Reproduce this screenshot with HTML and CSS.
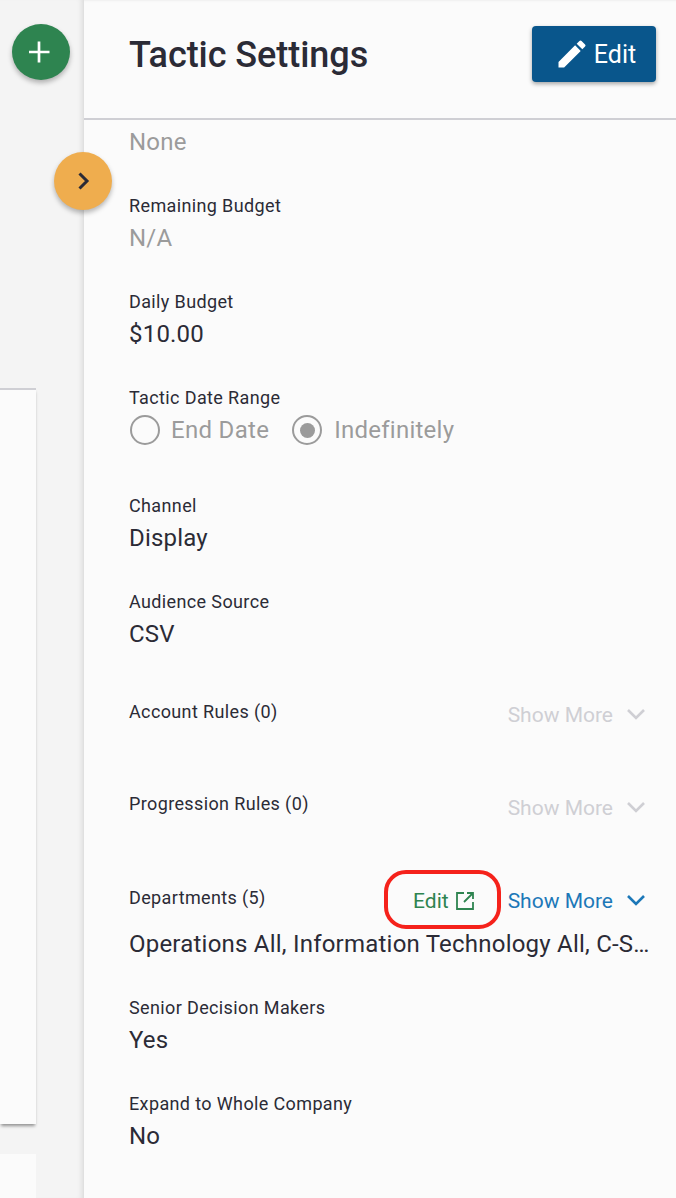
FILE: index.html
```html
<!DOCTYPE html>
<html lang="en">
<head>
<meta charset="utf-8">
<title>Tactic Settings</title>
<link rel="stylesheet" href="styles.css">
</head>
<body>
<div class="page">
  <aside class="rail">
    <button class="fab fab-add" aria-label="Add">
      <svg width="24" height="24" viewBox="0 0 24 24"><path d="M10 1.500v21M-.5 12h21" stroke="#fff" stroke-width="2.700" fill="none"/></svg>
    </button>
    <div class="card card-main"></div>
    <div class="card card-next"></div>
  </aside>
  <button class="fab fab-toggle" aria-label="Expand">
    <svg width="20" height="20" viewBox="0 0 20 20"><path d="M6.500 2.500 14 10l-7.500 7.500" stroke="#2b2b36" stroke-width="3" fill="none"/></svg>
  </button>
  <main class="panel">
    <header class="panel-head">
      <h1 class="panel-title">Tactic Settings</h1>
      <button class="btn-edit">
        <svg width="36" height="36" viewBox="0 0 24 24"><path fill="#fff" d="M3 17.250V21h3.750L17.810 9.940l-3.750-3.750L3 17.250zM20.710 7.040a1 1 0 0 0 0-1.410l-2.340-2.340a1 1 0 0 0-1.410 0l-1.830 1.830 3.750 3.750 1.830-1.830z"/></svg>
        <span>Edit</span>
      </button>
    </header>
    <div class="panel-body">
      <div class="value muted first">None</div>

      <section class="field"><div class="label">Remaining Budget</div><div class="value muted">N/A</div></section>
      <section class="field"><div class="label">Daily Budget</div><div class="value">$10.00</div></section>
      <section class="field">
        <div class="label">Tactic Date Range</div>
        <div class="radios">
          <span class="radio"><i class="dot"></i>End Date</span>
          <span class="radio"><i class="dot on"></i>Indefinitely</span>
        </div>
      </section>
      <section class="field after-radios"><div class="label">Channel</div><div class="value">Display</div></section>
      <section class="field"><div class="label">Audience Source</div><div class="value">CSV</div></section>

      <section class="field expand rules-first">
        <div class="label">Account Rules (0)</div>
        <div class="more disabled">Show More
          <svg class="chev" width="20" height="12" viewBox="0 0 20 12"><path d="M2 2l8 8 8-8" stroke="currentColor" stroke-width="2.600" fill="none"/></svg>
        </div>
      </section>
      <section class="field expand rules-second">
        <div class="label">Progression Rules (0)</div>
        <div class="more disabled">Show More
          <svg class="chev" width="20" height="12" viewBox="0 0 20 12"><path d="M2 2l8 8 8-8" stroke="currentColor" stroke-width="2.600" fill="none"/></svg>
        </div>
      </section>
      <section class="field dept">
        <div class="expand">
          <div class="label">Departments (5)</div>
          <div class="dept-actions">
            <a class="edit-link">Edit
              <svg width="20" height="20" viewBox="0 0 20 20"><path d="M9 2H2v16h16v-7M12 2h6v6M18 2l-9 9" stroke="#2e8450" stroke-width="1.800" fill="none"/></svg>
            </a>
            <div class="more">Show More
              <svg class="chev" width="20" height="12" viewBox="0 0 20 12"><path d="M2 2l8 8 8-8" stroke="currentColor" stroke-width="2.600" fill="none"/></svg>
            </div>
          </div>
        </div>
        <div class="value clip">Operations All, Information Technology All, C-Suite All, Sales All, Marketing All</div>
      </section>
      <section class="field"><div class="label">Senior Decision Makers</div><div class="value">Yes</div></section>
      <section class="field"><div class="label">Expand to Whole Company</div><div class="value">No</div></section>
    </div>
  </main>
</div>
</body>
</html>
```
FILE: styles.css
```css
* { box-sizing: border-box; }
html, body { margin: 0; height: 100%; }
body { font-family: Roboto, "Liberation Sans", sans-serif; background: #f4f4f4; color: #2b2b36; overflow: hidden; }
.page { position: relative; display: flex; height: 1198px; overflow: hidden; }

.rail { width: 84px; flex: none; display: flex; flex-direction: column; align-items: flex-start; padding-top: 24px; background: #f4f4f4; box-shadow: inset -6px 0 6px -5px rgba(0,0,0,.14); }
.fab { border: 0; padding: 0; border-radius: 50%; display: flex; align-items: center; justify-content: center; box-shadow: 0 3px 5px rgba(0,0,0,.28); }
.fab-add { width: 58px; height: 56px; margin-left: 12px; background: #2e8450; flex: none; }
.fab-toggle { position: absolute; left: 54px; top: 152px; width: 58px; height: 58px; background: #efad4e; z-index: 2; }
.card { width: 36px; background: #fbfbfb; flex: none; }
.card-main { margin-top: 308px; height: 736px; border-top: 2px solid #cfcfd4; box-shadow: 0 3px 3px -1px rgba(0,0,0,.4); }
.card-next { margin-top: 30px; flex: 1; }

.panel { flex: 1; min-width: 0; background: #fbfbfb; display: flex; flex-direction: column; }
.panel-head { height: 120px; flex: none; display: flex; justify-content: space-between; align-items: flex-start; padding: 26px 20px 0 45px; border-bottom: 2px solid #cfcfd4; box-shadow: inset 0 3px 3px -3px rgba(0,0,0,.1); }
.panel-title { margin: 9px 0 0; font-size: 36px; line-height: 40px; font-weight: 500; letter-spacing: -.05px; color: #2b2b36; }
.btn-edit { width: 124px; height: 56px; border: 0; border-radius: 4px; background: #09568c; color: #fff; font: 400 25px Roboto, sans-serif; display: flex; align-items: center; justify-content: center; gap: 4px; padding: 0 0 0 2px; box-shadow: 0 2px 4px rgba(0,0,0,.35); }

.panel-body { padding: 6px 30px 0 45px; }
.field { margin-top: 38px; }
.label { font-size: 18px; line-height: 20px; letter-spacing: .37px; color: #2b2b36; }
.value { font-size: 24px; line-height: 32px; margin-top: 6px; color: #2b2b36; letter-spacing: .2px; }
.value.first { margin-top: 0; }
.muted { color: #9b9b9b; }
.radios { display: flex; gap: 23px; margin-top: 6px; margin-left: 1px; font-size: 24px; line-height: 32px; letter-spacing: .3px; color: #9b9b9b; }
.radio { display: flex; align-items: center; gap: 11px; }
.radio:last-child { gap: 12px; letter-spacing: .25px; }
.dot { width: 30px; height: 30px; border: 2px solid #9b9b9b; border-radius: 50%; display: flex; align-items: center; justify-content: center; }
.dot.on::after { content: ""; width: 15px; height: 15px; border-radius: 50%; background: #9b9b9b; }
.after-radios { margin-top: 50px; }

.expand { display: flex; justify-content: space-between; align-items: flex-start; }
.rules-first { margin-top: 52px; }
.rules-first .more { margin-top: -1px; }
.rules-second { margin-top: 65px; }
.more { display: flex; align-items: center; gap: 13px; font-size: 21px; line-height: 28px; color: #1c78b8; }
.more.disabled { color: #cfcfd4; }
.chev { margin-top: -2px; }
.dept { margin-top: 66px; }
.dept-actions { display: flex; align-items: center; gap: 33px; margin-top: -1px; }
.edit-link { display: flex; align-items: center; gap: 6px; font-size: 21px; line-height: 28px; color: #2e8450; position: relative; }
.edit-link::before { content: ""; position: absolute; left: -29px; right: -26px; top: -17px; bottom: -14px; border: 4px solid #f5221b; border-radius: 22px; }
.clip { white-space: nowrap; overflow: hidden; text-overflow: ellipsis; margin-top: 13px; margin-right: -5px; letter-spacing: .22px; }
```
